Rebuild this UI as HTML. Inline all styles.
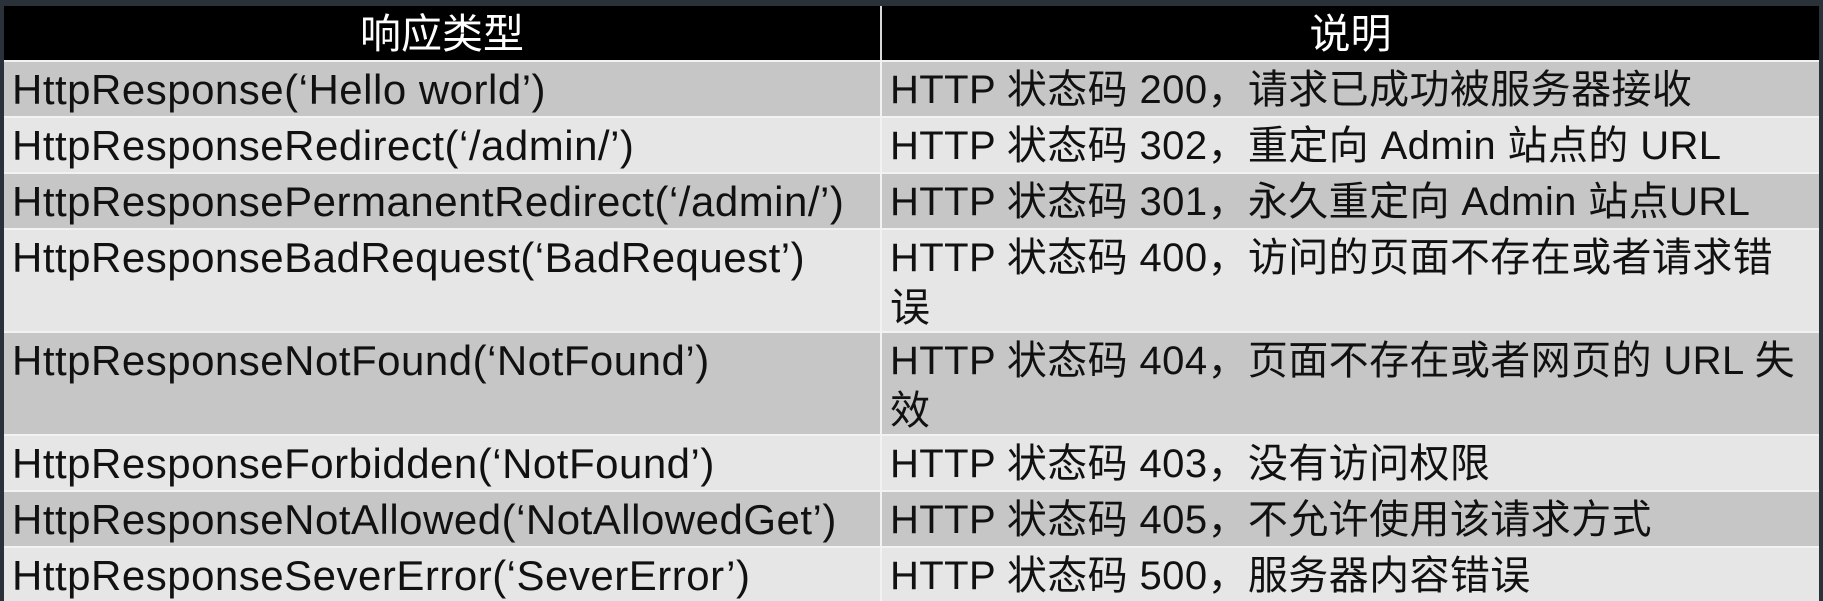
<!DOCTYPE html>
<html><head><meta charset="utf-8"><style>
html,body{margin:0;padding:0;}
body{width:1823px;height:601px;background:#2b3138;position:relative;overflow:hidden;font-family:"Liberation Sans","Noto Sans CJK SC",sans-serif;}
.r{position:absolute;left:4px;width:1815px;}
.c{position:absolute;top:0;bottom:0;box-sizing:border-box;}
.l{left:0;width:876px;padding-left:8px;letter-spacing:0.5px;font-size:42px !important;}
.rt{left:878px;right:0;padding-left:8px;letter-spacing:0.4px;}
.t{font-size:40px;line-height:50px;color:#111;padding-top:3px;}
.hd{background:#000;color:#fff;text-align:center;font-size:41px;line-height:56px;}
.odd{background:#c6c6c6}
.even{background:#e6e6e6}
</style></head><body>
<div class="r" style="top:6px;height:54px;background:#d8d8d8">
 <div class="c hd" style="left:0;width:876px;">响应类型</div>
 <div class="c hd" style="left:878px;right:0;">说明</div>
</div>
<div class="r" style="top:60px;height:541px;background:#f2f2f2"></div>

<div class="r" style="top:62px;height:54px">
 <div class="c l t odd">HttpResponse(‘Hello world’)</div>
 <div class="c rt t odd">HTTP 状态码 200，请求已成功被服务器接收</div>
</div>
<div class="r" style="top:118px;height:54px">
 <div class="c l t even">HttpResponseRedirect(‘/admin/’)</div>
 <div class="c rt t even">HTTP 状态码 302，重定向 Admin 站点的 URL</div>
</div>
<div class="r" style="top:174px;height:54px">
 <div class="c l t odd">HttpResponsePermanentRedirect(‘/admin/’)</div>
 <div class="c rt t odd">HTTP 状态码 301，永久重定向 Admin 站点URL</div>
</div>
<div class="r" style="top:230px;height:101px">
 <div class="c l t even">HttpResponseBadRequest(‘BadRequest’)</div>
 <div class="c rt t even">HTTP 状态码 400，访问的页面不存在或者请求错<br>误</div>
</div>
<div class="r" style="top:333px;height:101px">
 <div class="c l t odd">HttpResponseNotFound(‘NotFound’)</div>
 <div class="c rt t odd">HTTP 状态码 404，页面不存在或者网页的 URL 失<br>效</div>
</div>
<div class="r" style="top:436px;height:54px">
 <div class="c l t even">HttpResponseForbidden(‘NotFound’)</div>
 <div class="c rt t even">HTTP 状态码 403，没有访问权限</div>
</div>
<div class="r" style="top:492px;height:54px">
 <div class="c l t odd">HttpResponseNotAllowed(‘NotAllowedGet’)</div>
 <div class="c rt t odd">HTTP 状态码 405，不允许使用该请求方式</div>
</div>
<div class="r" style="top:548px;height:53px">
 <div class="c l t even">HttpResponseSeverError(‘SeverError’)</div>
 <div class="c rt t even">HTTP 状态码 500，服务器内容错误</div>
</div>
</body></html>
